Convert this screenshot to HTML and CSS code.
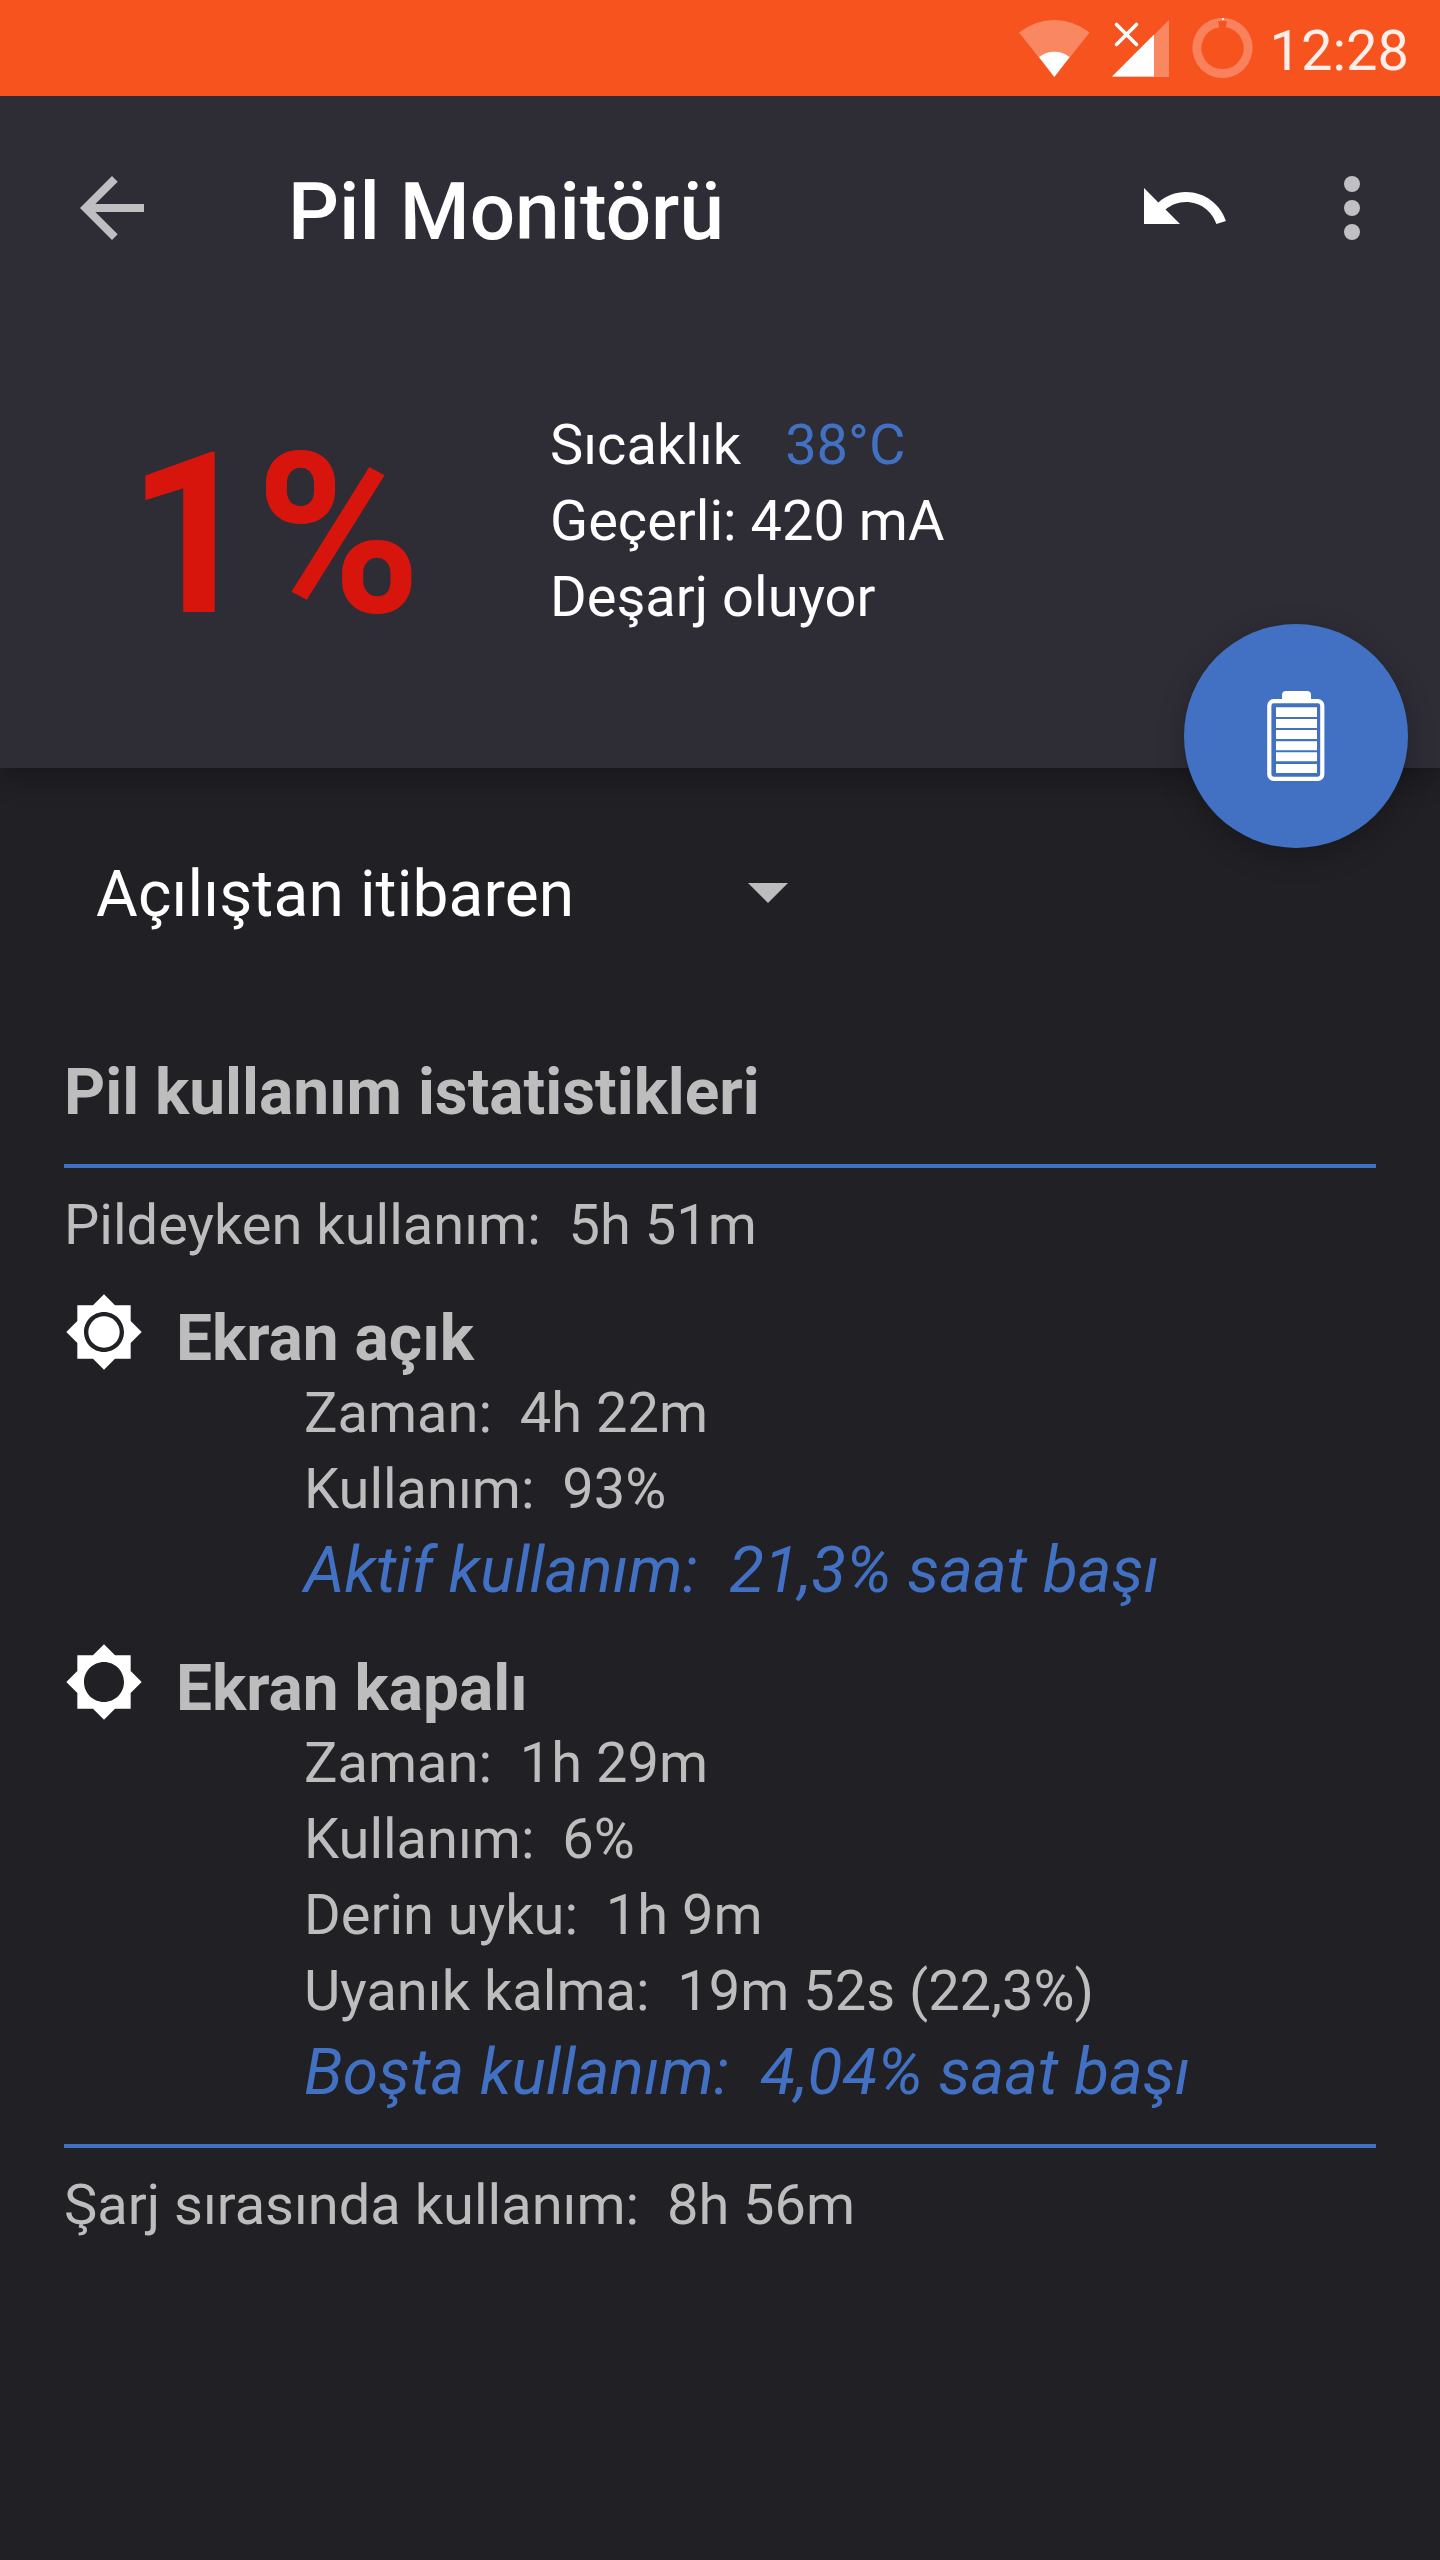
FILE: index.html
```html
<!DOCTYPE html>
<html lang="tr">
<head>
<meta charset="utf-8">
<title>Pil Monitörü</title>
<link rel="stylesheet" href="styles.css">
</head>
<body>
<div class="status">
  <svg class="wifi" width="70" height="58" viewBox="0 0 70 58"><path d="M35.3 57L0 12.600Q16 0 35.300 0T70.600 12.600z" fill="#fff" fill-opacity=".3"/><path d="M35.300 57L20 37Q27 31.700 35.300 31.700T50.600 37z" fill="#fff"/></svg>
  <svg class="signal" width="60" height="58" viewBox="0 0 60 58"><path d="M0 57L57 0V57z" fill="#fff" fill-opacity=".3"/><path d="M0 56.500L42 14.500V56.500z" fill="#fff"/><path d="M4.500 4.500l20 20M24.500 4.500l-20 20" stroke="#fff" stroke-width="3.600" stroke-linecap="round"/></svg>
  <svg class="ring" width="60" height="60" viewBox="0 0 60 60"><path d="M26.500 4.700A25.600 25.600 0 1 0 34.500 4.700" fill="none" stroke="#fff" stroke-opacity=".27" stroke-width="9"/><path d="M26 .3Q30-.3 35 .3V3H26z" fill="#fff" fill-opacity=".27"/><path d="M30 0h2v2h-2z" fill="#fff"/></svg>
  <span class="clock">12:28</span>
</div>
<header class="header">
  <div class="toolbar">
    <svg class="back" width="64" height="64" viewBox="0 0 64 64"><path d="M64 28H15.300L37.700 5.700 32 0 0 32l32 32 5.700-5.700L15.300 36H64z" fill="#bfbfc2"/></svg>
    <h1 class="title">Pil Monitörü</h1>
    <svg class="undo" width="96" height="96" viewBox="0 0 24 24"><path d="M12.500 8c-2.650 0-5.050.99-6.900 2.600L2 7v9h9l-3.620-3.620c1.390-1.160 3.160-1.880 5.120-1.880 3.540 0 6.550 2.310 7.600 5.500l2.370-.78C21.080 11.030 17.150 8 12.500 8z" fill="#fff"/></svg>
    <svg class="more" width="16" height="64" viewBox="0 0 16 64"><g fill="#c0c0c3"><circle cx="8" cy="8" r="8"/><circle cx="8" cy="32" r="8"/><circle cx="8" cy="56" r="8"/></g></svg>
  </div>
  <div class="summary">
    <div class="level">1%</div>
    <div class="facts">
      <div>Sıcaklık<span class="temp">38°C</span></div>
      <div>Geçerli: 420 mA</div>
      <div>Deşarj oluyor</div>
    </div>
  </div>
  <button class="fab" aria-label="Pil">
    <svg width="58" height="90" viewBox="0 0 58 90"><path d="M15 10V4q0-4 4-4h21q4 0 4 4v6z" fill="#fff"/><rect x="2.300" y="10.200" width="53" height="77.600" rx="4.500" fill="none" stroke="#fff" stroke-width="4.200"/><path d="M9 16.300h41v9.700H9zM9 28h41v9H9zM9 39h41v9H9zM9 50.300h41v9H9zM9 61.300h41v9H9zM9 73h41v9H9z" fill="#fff"/></svg>
  </button>
</header>
<main class="content">
  <div class="picker"><span>Açılıştan itibaren</span><svg class="caret" width="40" height="20" viewBox="0 0 40 20"><path d="M0 0h40L20 20z" fill="#bdbdbd"/></svg></div>
  <h2 class="heading">Pil kullanım istatistikleri</h2>
  <hr class="rule">
  <p class="row">Pildeyken kullanım:&nbsp; 5h 51m</p>
  <section class="group">
    <svg class="sun" width="80" height="80" viewBox="0 0 24 24"><path fill="#fff" fill-rule="evenodd" d="M20 8.690V4h-4.690L12 .69 8.690 4H4v4.690L.69 12 4 15.310V20h4.690L12 23.310 15.310 20H20v-4.690L23.310 12 20 8.690zM12 18c-3.310 0-6-2.690-6-6s2.690-6 6-6 6 2.690 6 6-2.690 6-6 6z"/><circle cx="12" cy="12" r="4.700" fill="#fff"/></svg>
    <div class="details">
      <h3 class="name">Ekran açık</h3>
      <p class="row">Zaman:&nbsp; 4h 22m</p>
      <p class="row">Kullanım:&nbsp; 93%</p>
      <p class="row rate">Aktif kullanım:&nbsp; 21,3% saat başı</p>
    </div>
  </section>
  <section class="group">
    <svg class="sun" width="80" height="80" viewBox="0 0 24 24"><path fill="#fff" fill-rule="evenodd" d="M20 8.690V4h-4.690L12 .69 8.690 4H4v4.690L.69 12 4 15.310V20h4.690L12 23.310 15.310 20H20v-4.690L23.310 12 20 8.690zM12 18c-3.310 0-6-2.690-6-6s2.690-6 6-6 6 2.690 6 6-2.690 6-6 6z"/></svg>
    <div class="details">
      <h3 class="name">Ekran kapalı</h3>
      <p class="row">Zaman:&nbsp; 1h 29m</p>
      <p class="row">Kullanım:&nbsp; 6%</p>
      <p class="row">Derin uyku:&nbsp; 1h 9m</p>
      <p class="row">Uyanık kalma:&nbsp; 19m 52s (22,3%)</p>
      <p class="row rate">Boşta kullanım:&nbsp; 4,04% saat başı</p>
    </div>
  </section>
  <hr class="rule last">
  <p class="row">Şarj sırasında kullanım:&nbsp; 8h 56m</p>
</main>
</body>
</html>
```
FILE: styles.css
```css
* { box-sizing: border-box; }
body {
  margin: 0;
  width: 1440px;
  min-height: 2560px;
  background: #212025;
  color: #bdbdbd;
  font-family: Roboto, "Noto Sans", sans-serif;
  font-size: 56px;
  line-height: 76px;
}
h1, h2, h3, p { margin: 0; }
svg { display: block; flex: none; overflow: visible; }

.status {
  position: relative;
  z-index: 1;
  height: 96px;
  background: #f7531f;
  display: flex;
  justify-content: flex-end;
  align-items: flex-start;
  padding-right: 31px;
}
.wifi { margin: 20px 23px 0 0; }
.signal { margin: 20px 20px 0 0; }
.ring { margin: 18px 18px 0 0; }
.clock { color: rgba(255, 255, 255, .9); margin-top: 13px; }

.header {
  position: relative;
  height: 672px;
  background: #2e2d36;
  color: #fff;
  box-shadow: 0 8px 28px rgba(0, 0, 0, .32);
}
.toolbar {
  height: 224px;
  display: flex;
  align-items: center;
  padding: 0 80px;
}
.title {
  flex: 1;
  margin-left: 144px;
  padding-top: 7px;
  font-size: 80px;
  font-weight: 500;
  line-height: 96px;
}
.undo { margin-right: 112px; }
.summary { display: flex; padding-top: 87px; }
.level {
  width: 550px;
  padding: 14px 0 0 127px;
  font-size: 224px;
  line-height: 230px;
  font-weight: 700;
  color: #d8150d;
}
.temp { color: #4271c4; margin-left: 44px; }
.fab {
  position: absolute;
  left: 1184px;
  top: 528px;
  width: 224px;
  height: 224px;
  border: 0;
  padding: 0;
  border-radius: 50%;
  background: #4271c4;
  display: grid;
  place-items: center;
  box-shadow: 0 8px 28px rgba(0, 0, 0, .25);
}

.content { padding: 83px 64px 0; }
.picker {
  display: flex;
  align-items: center;
  width: 724px;
  justify-content: space-between;
  padding-left: 32px;
  color: #fff;
  font-size: 64px;
  line-height: 88px;
  letter-spacing: .14px;
}
.caret { margin-top: -4px; }
.heading {
  margin-top: 112px;
  font-size: 64px;
  line-height: 84px;
  font-weight: 700;
}
.rule {
  height: 4px;
  margin: 29px 0 19px;
  border: 0;
  background: #4271c4;
}
.group { display: flex; margin-top: 38px; }
.sun { margin-top: -9px; }
.details { margin-left: 32px; }
.details .row { padding-left: 128px; }
.name {
  padding-top: 2px;
  font-size: 64px;
  line-height: 72px;
  font-weight: 700;
}
.rate {
  padding-top: 2px;
  font-size: 64px;
  line-height: 84px;
  font-style: italic;
  color: #4271c4;
}
.last { margin-top: 29px; }
```
